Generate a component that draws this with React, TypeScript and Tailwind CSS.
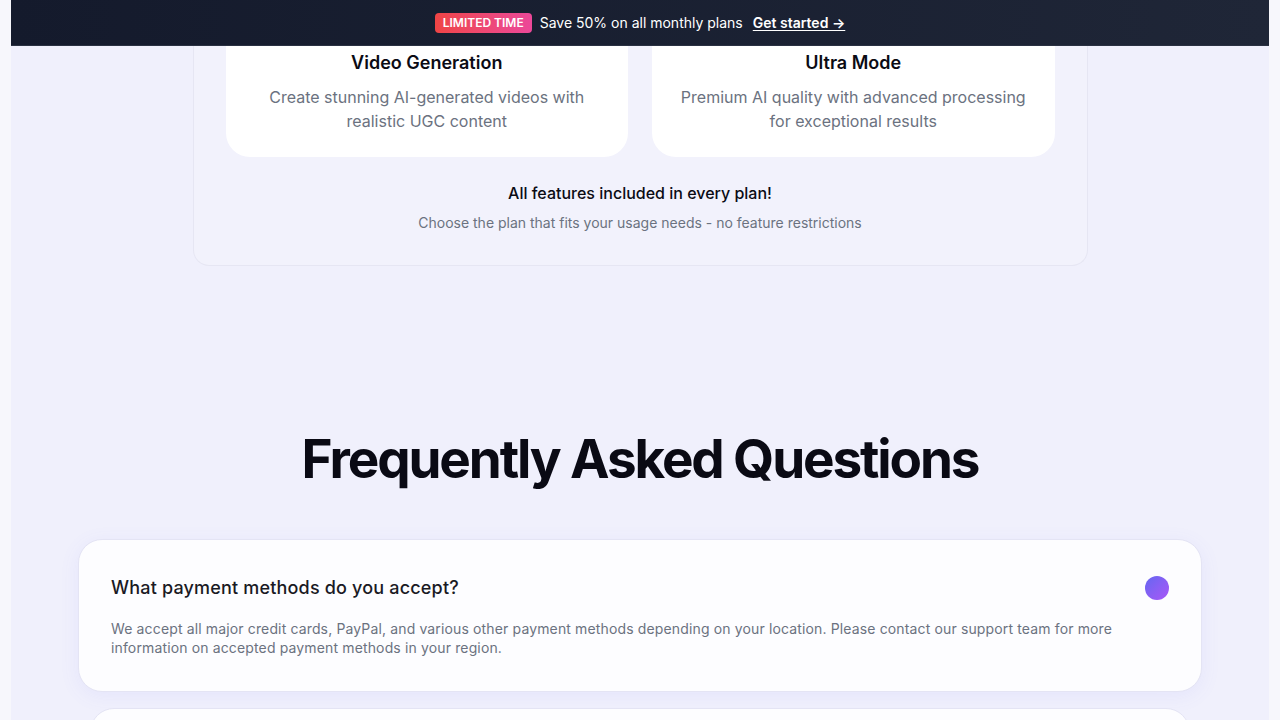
import React from "react";

export default function App() {
  return (
    <div className="min-h-screen w-full bg-[#f7f7fc]" style={{ fontFamily: "Inter, 'Noto Sans', sans-serif" }}>
      <div className="mx-[11px] h-[720px] overflow-hidden bg-[#f0f0fc]">
        {/* Banner */}
        <div className="relative z-10 flex h-[46px] items-center justify-center gap-2 border-b border-[#2a3142] bg-gradient-to-r from-[#141a2c] to-[#1f2637] text-white">
          <span className="rounded-[4px] bg-gradient-to-r from-[#ef4444] to-[#ec4899] px-2 py-[2px] text-[12px] font-semibold leading-4">LIMITED TIME</span>
          <span className="text-[14px] leading-5 text-white">Save 50% on all monthly plans</span>
          <span className="ml-0.5 text-[14px] font-semibold leading-5 underline underline-offset-2">Get started →</span>
        </div>

        {/* Features panel */}
        <div className="-mt-[24px] flex justify-center">
          <div className="w-[895px] rounded-b-2xl border border-t-0 border-[#e6e6f3] bg-[#f2f2fc] px-8 pb-8">
            <div className="grid grid-cols-2 gap-6">
              <div className="rounded-b-3xl bg-white px-6 pb-6 pt-[27px] text-center">
                <div className="text-[18px] font-semibold leading-7 text-[#0b0b14]">Video Generation</div>
                <p className="mt-[8px] text-[16px] leading-6 text-[#6b7280]">Create stunning AI-generated videos with realistic UGC content</p>
              </div>
              <div className="rounded-b-3xl bg-white px-6 pb-6 pt-[27px] text-center">
                <div className="text-[18px] font-semibold leading-7 text-[#0b0b14]">Ultra Mode</div>
                <p className="mt-[8px] text-[16px] leading-6 text-[#6b7280]">Premium AI quality with advanced processing for exceptional results</p>
              </div>
            </div>
            <div className="mt-[24px] text-center text-[16px] font-medium leading-6 text-[#0b0b14]">All features included in every plan!</div>
            <div className="mt-[8px] text-center text-[14px] leading-5 text-[#6b7280]">Choose the plan that fits your usage needs - no feature restrictions</div>
          </div>
        </div>

        {/* FAQ */}
        <h2 className="mt-[162px] text-center text-[53px] font-bold leading-[62px] tracking-[-0.04em] text-[#0a0a14]">Frequently Asked Questions</h2>

        <div className="mx-auto mt-[49px] w-[1124px]">
          <div className="rounded-3xl border border-[#e4e4f4] bg-[#fdfdff] px-8 pb-[34px] pt-[34px] shadow-[0_4px_20px_rgba(99,102,241,0.08)]">
            <div className="flex items-center justify-between">
              <div className="text-[18px] font-medium leading-7 tracking-[0.01em] text-[#1a1a24]">What payment methods do you accept?</div>
              <div className="h-6 w-6 rounded-full bg-gradient-to-br from-[#6366f1] to-[#a855f7]" />
            </div>
            <p className="mt-[17px] pr-12 text-[14px] leading-[19px] tracking-[0.01em] text-[#6b7280]">
              We accept all major credit cards, PayPal, and various other payment methods depending on your location. Please contact our support team for more information on accepted payment methods in your region.
            </p>
          </div>
          <div className="mx-3 mt-4 h-[60px] rounded-3xl border border-[#e4e4f4] bg-[#fdfdff]" />
        </div>
      </div>
    </div>
  );
}
